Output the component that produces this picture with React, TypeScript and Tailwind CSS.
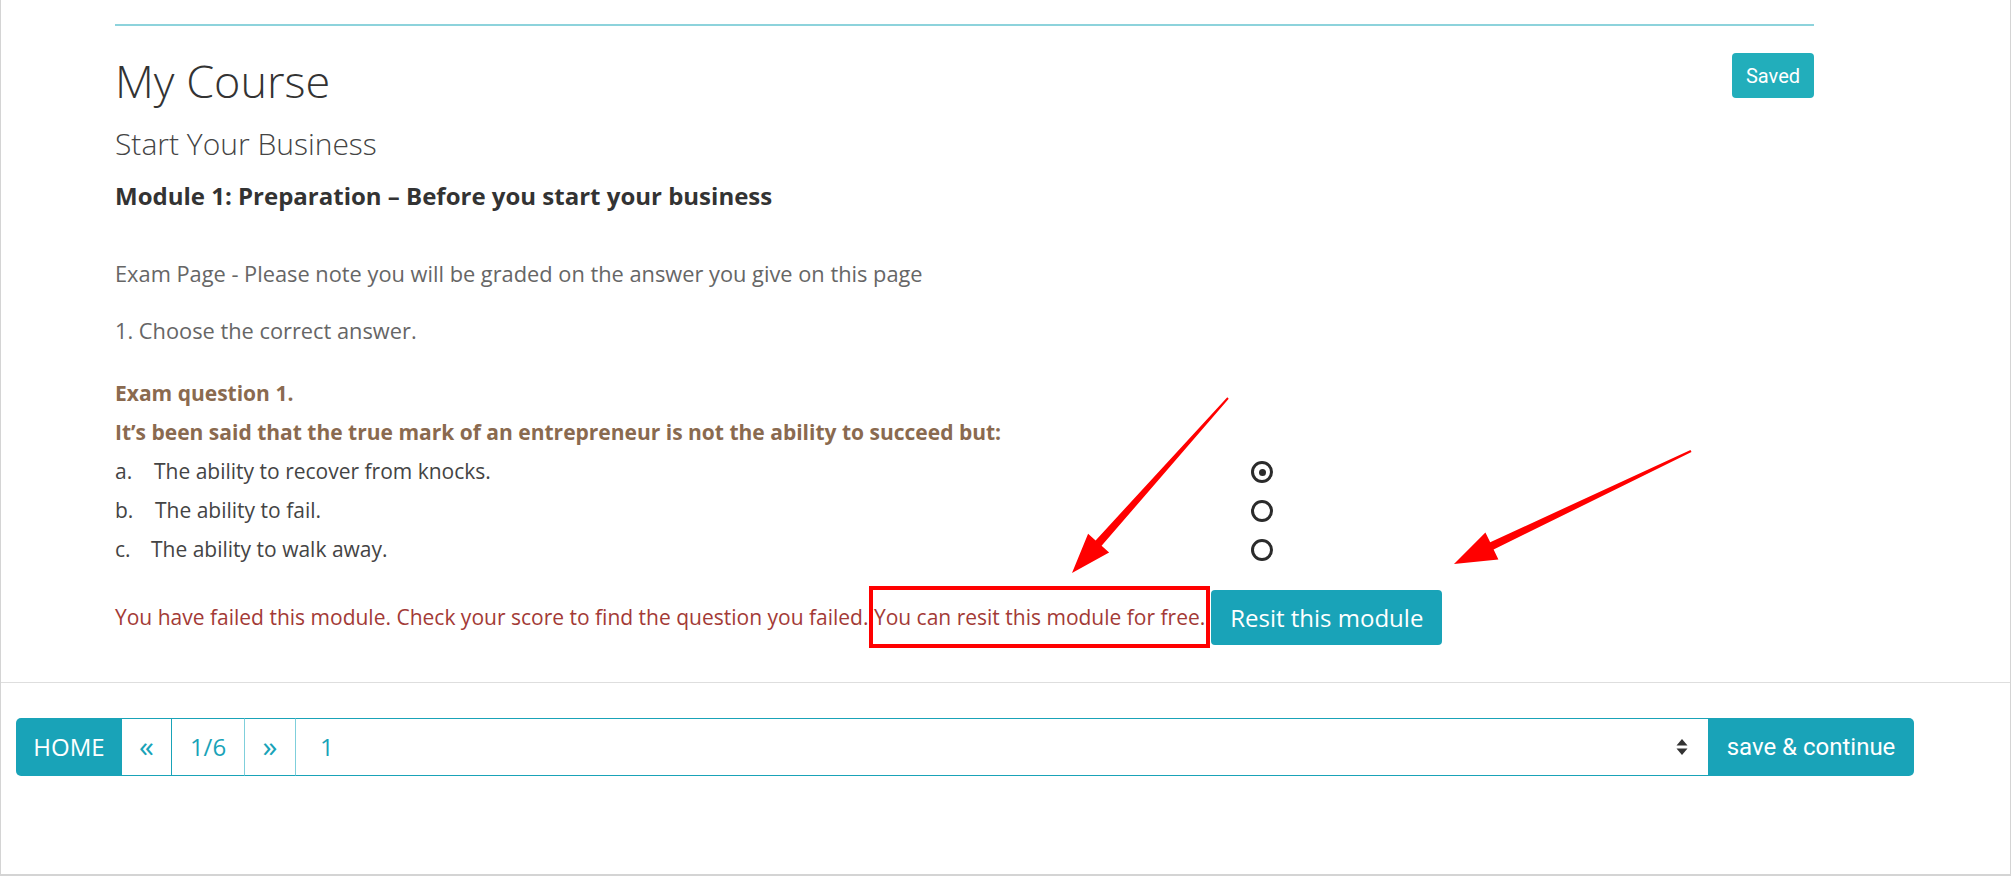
import React from 'react';

const options = [
  { key: 'a.', text: 'The ability to recover from knocks.', gap: 'w-[39px]', checked: true },
  { key: 'b.', text: 'The ability to fail.', gap: 'w-[40px]', checked: false },
  { key: 'c.', text: 'The ability to walk away.', gap: 'w-[36px]', checked: false },
];

const Radio = ({ checked }: { checked: boolean }) => (
  <span className="flex h-[22px] w-[22px] items-center justify-center rounded-full border-[3px] border-[#2b2b2b] bg-white">
    {checked && <span className="h-[7px] w-[7px] rounded-full bg-[#2b2b2b]" />}
  </span>
);

const App: React.FC = () => {
  return (
    <div className="relative h-[876px] w-[2011px] overflow-hidden border-x border-b-2 border-[#d4d4d4] bg-white font-['Open_Sans',sans-serif]">
      <div className="ml-[114px] mr-[196px] pt-6">
        <div className="border-t-2 border-[#8dd3dc]" />

        {/* header */}
        <div className="flex items-start justify-between">
          <h1 className="mt-[30px] text-[45px] font-light leading-[50px] text-[#333]">My Course</h1>
          <span className="mt-[27px] flex h-[45px] w-[82px] items-center justify-center rounded-[4px] bg-[#22aebb] font-['Roboto',sans-serif] text-[20px] text-white">
            Saved
          </span>
        </div>
        <h3 className="mt-[20px] text-[30px] font-light leading-[35px] text-[#444]">Start Your Business</h3>
        <h4 className="mt-[20px] text-[24px] font-bold leading-[29px] text-[#333]">
          Module 1: Preparation – Before you start your business
        </h4>

        <p className="mt-[50px] text-[21.8px] leading-[28px] text-[#666]">
          Exam Page - Please note you will be graded on the answer you give on this page
        </p>
        <p className="mt-[29px] text-[21.8px] leading-[28px] text-[#666]">1. Choose the correct answer.</p>

        {/* question */}
        <div className="mt-[29.5px] text-[21px] text-[#444]">
          <div className="flex h-[39px] items-center font-bold text-[#8a6a4f]">Exam question 1.</div>
          <div className="flex h-[39px] items-center font-bold text-[#8a6a4f]">
            It’s been said that the true mark of an entrepreneur is not the ability to succeed but:
          </div>
          {options.map((o) => (
            <div key={o.key} className="grid h-[39px] grid-cols-[1136px_40px] items-center">
              <div className="flex items-center">
                <span className={o.gap}>{o.key}</span>
                <span>{o.text}</span>
              </div>
              <Radio checked={o.checked} />
            </div>
          ))}
        </div>

        {/* result */}
        <div className="mt-[20.5px] flex items-center text-[21px] text-[#a33a36]">
          <span>You have failed this module. Check your score to find the question you failed. You can resit this module for free.</span>
          <button className="ml-[6px] flex h-[55px] w-[231px] shrink-0 items-center justify-center rounded-[4px] bg-[#19a3b8] text-[24px] text-white">
            Resit this module
          </button>
        </div>
      </div>

      <div className="mt-[37px] border-t border-[#dedede]" />

      {/* footer nav */}
      <div className="ml-[15px] mt-[35px] flex h-[58px] w-[1898px] text-[24px] text-[#19a3b8]">
        <span className="flex w-[106px] items-center justify-center rounded-l-[5px] bg-[#19a3b8] text-white">HOME</span>
        <span className="flex w-[50px] items-center justify-center border-y border-r border-[#19a3b8] pb-[3px] text-[30px]">«</span>
        <span className="flex w-[73px] items-center justify-center border-y border-r border-y-[#19a3b8] border-r-[#7fcfdb]">1/6</span>
        <span className="flex w-[51px] items-center justify-center border-y border-r border-y-[#19a3b8] border-r-[#7fcfdb] pb-[3px] text-[30px]">»</span>
        <div className="flex flex-1 items-center justify-between border-y border-[#19a3b8] pl-6 pr-[20px]">
          <span>1</span>
          <svg width="12" height="18" viewBox="0 0 12 18">
            <path d="M6 1 L11.5 7.5 H0.5 Z" fill="#333" />
            <path d="M6 17 L11.5 10.5 H0.5 Z" fill="#333" />
          </svg>
        </div>
        <span className="flex w-[206px] items-center justify-center rounded-r-[5px] bg-[#19a3b8] font-['Roboto',sans-serif] text-white">
          save &amp; continue
        </span>
      </div>

      {/* annotations */}
      <div className="absolute left-[868px] top-[586px] h-[62px] w-[341px] border-4 border-[#ff0000]" />
      <svg className="pointer-events-none absolute left-0 top-0" width="2011" height="876">
        <polygon
          points="1227.7,398.7 1100.6,545.8 1108.1,552.4 1071,573 1087.1,533.8 1094.6,540.4 1226.3,397.3"
          fill="#ff0000"
        />
        <polygon
          points="1690.5,452.1 1492.6,549.5 1497.4,559.4 1453,564 1484.4,532.4 1489.2,542.3 1689.5,449.9"
          fill="#ff0000"
        />
      </svg>
    </div>
  );
};

export default App;
